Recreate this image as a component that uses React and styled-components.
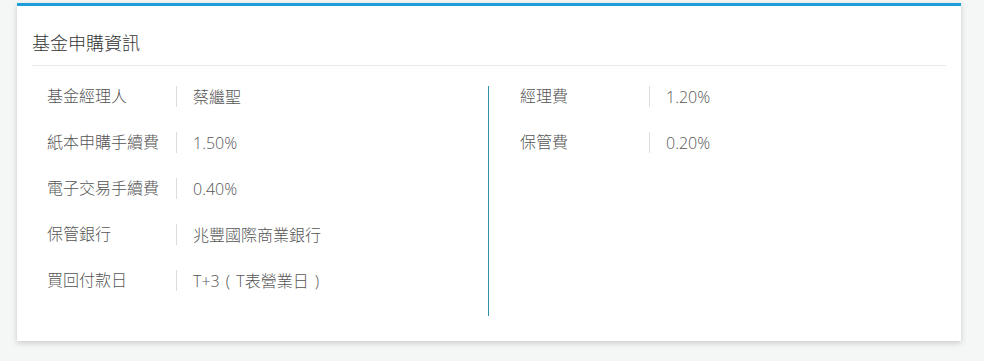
import React from 'react';
import styled, { createGlobalStyle } from 'styled-components';

const GlobalStyle = createGlobalStyle`
  html, body {
    margin: 0;
    padding: 0;
    background: #f5f7f7;
  }
  body {
    font-family: "Open Sans", "Noto Sans CJK TC", sans-serif;
    padding: 3px 23px 20px 17px;
  }
`;

const Card = styled.section`
  width: 944px;
  box-sizing: border-box;
  background: #fff;
  border-top: 3px solid #1e9ddb;
  box-shadow: 0 2px 6px rgba(0, 0, 0, 0.18);
  padding: 0 15px 25px;
`;

const Title = styled.h3`
  margin: 0;
  padding: 26px 0 11px;
  font-size: 18px;
  font-weight: 300;
  line-height: 22px;
  color: #333;
  border-bottom: 1px solid #e9e9e9;
`;

const Body = styled.div`
  display: grid;
  grid-template-columns: 457px 1fr;
  margin-top: 20px;
`;

const Column = styled.div`
  padding-left: ${(p) => p.$indent}px;
  border-right: ${(p) => (p.$divider ? '1px solid #2f8fa8' : 'none')};
`;

const Row = styled.div`
  display: flex;
  align-items: center;
  height: 21px;
  margin-bottom: 25px;
  font-size: 16px;
  font-weight: 300;
  color: #555;
`;

const Label = styled.div`
  width: 130px;
  height: 21px;
  line-height: 21px;
  border-right: 1px solid #ddd;
  box-sizing: border-box;
  white-space: nowrap;
`;

const Value = styled.div`
  padding-left: 16px;
  line-height: 22px;
  white-space: nowrap;
  word-spacing: 2px;
`;

const leftRows = [
  ['基金經理人', '蔡繼聖'],
  ['紙本申購手續費', '1.50%'],
  ['電子交易手續費', '0.40%'],
  ['保管銀行', '兆豐國際商業銀行'],
  ['買回付款日', 'T+3 ( T表營業日 )'],
];

const rightRows = [
  ['經理費', '1.20%'],
  ['保管費', '0.20%'],
];

const Rows = ({ items }) =>
  items.map(([label, value]) => (
    <Row key={label}>
      <Label>{label}</Label>
      <Value>{value}</Value>
    </Row>
  ));

export default function App() {
  return (
    <>
      <GlobalStyle />
      <Card>
        <Title>基金申購資訊</Title>
        <Body>
          <Column $indent={15} $divider>
            <Rows items={leftRows} />
          </Column>
          <Column $indent={31}>
            <Rows items={rightRows} />
          </Column>
        </Body>
      </Card>
    </>
  );
}
